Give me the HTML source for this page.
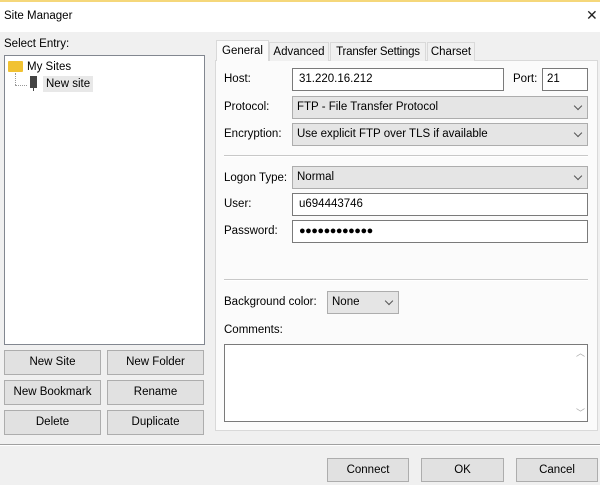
<!DOCTYPE html>
<html><head><style>
*{box-sizing:border-box;margin:0;padding:0}
body{width:600px;height:485px;background:#f0f0f0;font-family:"Liberation Sans",sans-serif;font-size:11.5px;color:#000;position:relative;overflow:hidden}
.a{position:absolute}
.t{position:absolute;white-space:nowrap;line-height:14px}
.inp{position:absolute;background:#fff;border:1px solid #7a7a7a;padding-left:6px;line-height:20px}
.sel{position:absolute;background:#e5e5e5;border:1px solid #adadad;padding-left:4px;line-height:20px}
.sel:after{content:"";position:absolute;right:6px;top:6px;width:5px;height:5px;border-right:1px solid #555;border-bottom:1px solid #555;transform:rotate(45deg)}
.btn{position:absolute;background:#e1e1e1;border:1px solid #adadad;text-align:center;line-height:23px}
.sep{position:absolute;height:2px;border-top:1px solid #c8c8c8;border-bottom:1px solid #fff}
.tab{position:absolute;top:42px;height:19px;background:#f0f0f0;border:1px solid #d9d9d9;border-bottom:none;text-align:center;line-height:18px}
</style></head><body>
<div class="a" style="left:0;top:0;width:600px;height:2px;background:#f5d77a"></div>
<div class="a" style="left:0;top:2px;width:600px;height:30px;background:#fff"></div>
<div class="t" style="left:4px;top:9px">Site Manager</div>
<div class="t" style="left:586px;top:8px;font-size:14px;color:#222">✕</div>

<div class="t" style="left:4px;top:37px">Select Entry:</div>
<div class="a" style="left:4px;top:55px;width:201px;height:290px;background:#fff;border:1px solid #828790"></div>
<div class="a" style="left:8px;top:61px;width:15px;height:11px;background:#f1c232;border-radius:1px"></div>
<div class="t" style="left:27px;top:60px">My Sites</div>
<div class="a" style="left:15px;top:73px;width:1px;height:12px;border-left:1px dotted #999"></div>
<div class="a" style="left:15px;top:85px;width:12px;height:1px;border-top:1px dotted #999"></div>
<div class="a" style="left:30px;top:76px;width:7px;height:12px;background:#444"></div>
<div class="a" style="left:33px;top:88px;width:1px;height:3px;background:#444"></div>
<div class="a" style="left:43px;top:76px;width:50px;height:16px;background:#e8e8e8"></div>
<div class="t" style="left:46px;top:77px">New site</div>

<div class="btn" style="left:4px;top:350px;width:97px;height:25px">New Site</div>
<div class="btn" style="left:107px;top:350px;width:97px;height:25px">New Folder</div>
<div class="btn" style="left:4px;top:380px;width:97px;height:25px">New Bookmark</div>
<div class="btn" style="left:107px;top:380px;width:97px;height:25px">Rename</div>
<div class="btn" style="left:4px;top:410px;width:97px;height:25px">Delete</div>
<div class="btn" style="left:107px;top:410px;width:97px;height:25px">Duplicate</div>

<div class="a" style="left:215px;top:60px;width:383px;height:371px;background:#fbfbfb;border:1px solid #d9d9d9"></div>
<div class="tab" style="left:269px;width:60px">Advanced</div>
<div class="tab" style="left:330px;width:96px;letter-spacing:-0.2px">Transfer Settings</div>
<div class="tab" style="left:427px;width:48px">Charset</div>
<div class="tab" style="left:216px;top:40px;height:21px;width:53px;background:#fbfbfb;line-height:20px">General</div>

<div class="t" style="left:224px;top:72px">Host:</div>
<div class="inp" style="left:292px;top:68px;width:212px;height:23px">31.220.16.212</div>
<div class="t" style="left:513px;top:72px">Port:</div>
<div class="inp" style="left:542px;top:68px;width:46px;height:23px;padding-left:4px">21</div>
<div class="t" style="left:224px;top:100px">Protocol:</div>
<div class="sel" style="left:292px;top:96px;width:296px;height:23px">FTP - File Transfer Protocol</div>
<div class="t" style="left:224px;top:127px">Encryption:</div>
<div class="sel" style="left:292px;top:123px;width:296px;height:23px">Use explicit FTP over TLS if available</div>
<div class="sep" style="left:224px;top:155px;width:364px"></div>
<div class="t" style="left:224px;top:171px">Logon Type:</div>
<div class="sel" style="left:292px;top:166px;width:296px;height:23px">Normal</div>
<div class="t" style="left:224px;top:197px">User:</div>
<div class="inp" style="left:292px;top:193px;width:296px;height:23px">u694443746</div>
<div class="t" style="left:224px;top:224px">Password:</div>
<div class="inp" style="left:292px;top:220px;width:296px;height:23px;font-size:11px;letter-spacing:-0.5px">●●●●●●●●●●●●</div>
<div class="sep" style="left:224px;top:279px;width:364px"></div>
<div class="t" style="left:224px;top:295px">Background color:</div>
<div class="sel" style="left:327px;top:291px;width:72px;height:23px">None</div>
<div class="t" style="left:224px;top:323px">Comments:</div>
<div class="a" style="left:224px;top:344px;width:364px;height:78px;background:#fff;border:1px solid #7a7a7a"></div>
<div class="t" style="left:576px;top:346px;font-size:9px;color:#aaa">︿</div>
<div class="t" style="left:576px;top:406px;font-size:9px;color:#aaa">﹀</div>

<div class="sep" style="left:0;top:444px;width:600px;border-top-color:#a0a0a0"></div>
<div class="btn" style="left:327px;top:458px;width:82px;height:24px">Connect</div>
<div class="btn" style="left:421px;top:458px;width:83px;height:24px">OK</div>
<div class="btn" style="left:516px;top:458px;width:82px;height:24px">Cancel</div>
</body></html>
